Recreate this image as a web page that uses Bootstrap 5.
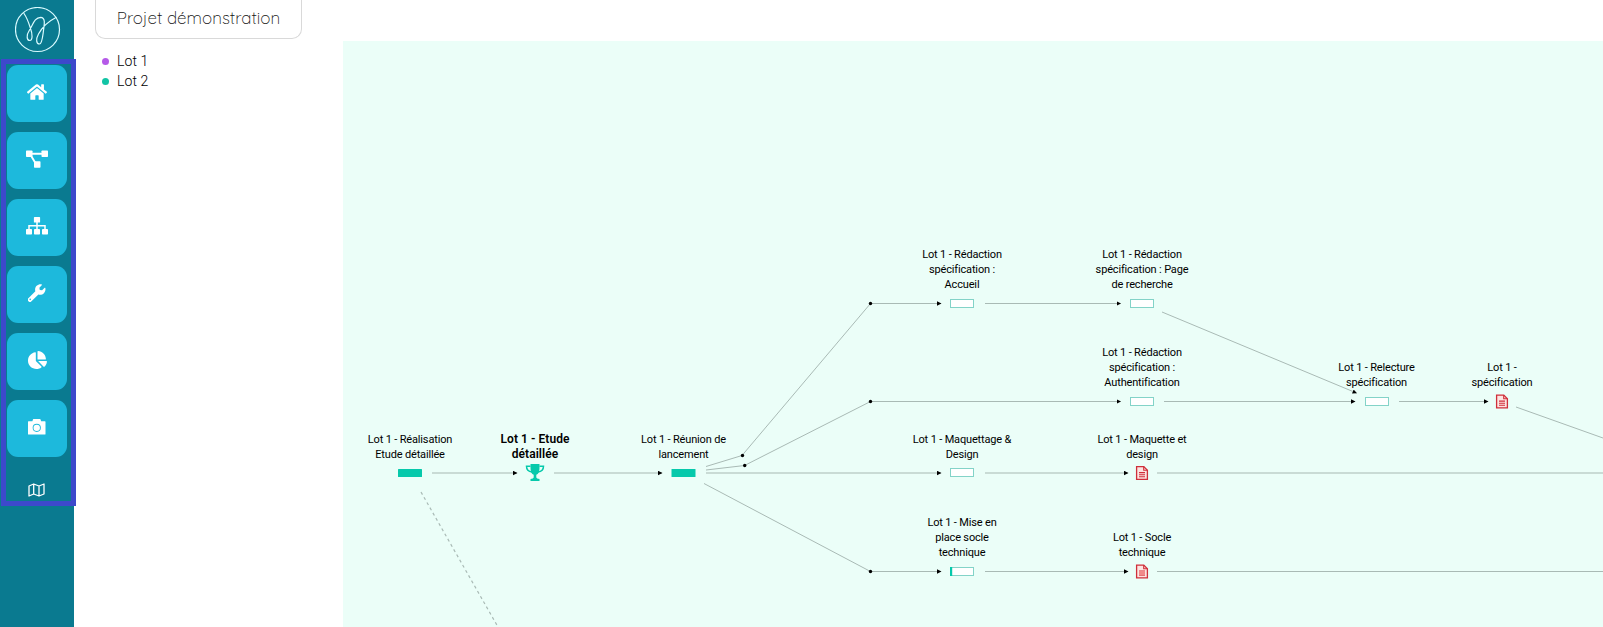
<!DOCTYPE html>
<html lang="fr">
<head>
<meta charset="utf-8">
<meta name="viewport" content="width=device-width, initial-scale=1">
<title>Projet démonstration</title>
<link href="https://cdn.jsdelivr.net/npm/bootstrap@5.3.0/dist/css/bootstrap.min.css" rel="stylesheet">
<style>
  body { font-family: Roboto, "Liberation Sans", sans-serif; color: #000; background: #fff; }
  .side-rail { width: 74px; background: #0a7a90; z-index: 2; }
  .brand-area { height: 59px; padding: 7px 0 0 15px; }
  .rail-menu { width: 75px; height: 447px; margin-left: 1px; border: 5px solid #3d49cb; padding: 1px 0 0 1px; gap: 10px; }
  .rail-btn { width: 60px; height: 57px; border-radius: 11px; background: #1db9dc; border: 0; flex: none; padding: 0 0 3px 0; }
  .rail-link { width: 59px; height: 46px; flex: none; }
  .lots-panel { width: 269px; }
  .project-title { margin-left: 21px; width: 207px; height: 39px; border: 1px solid #d9d9d9; border-top: 0; border-radius: 0 0 10px 10px;
    font: 300 17px/36px Quicksand, Lato, sans-serif; color: #111; white-space: nowrap; }
  .lot-list { margin: 12px 0 0 27.5px; font-size: 14px; font-weight: 350; line-height: 20px; letter-spacing: .1px; }
  .lot-dot { width: 7px; height: 7px; margin-right: 8.5px; }
  .graph-canvas { margin-top: 41px; background: #ebfef8; }
  .graph-node { position: absolute; left: calc(var(--x) * 1px - 343px); top: calc(var(--y) * 1px - 41px);
    transform: translate(-50%, -100%); padding-bottom: 11px; font-size: 11px; line-height: 15.2px; letter-spacing: -.16px; white-space: nowrap; text-align: center; }
  .milestone { font-size: 12px; font-weight: 600; letter-spacing: .06px; }
</style>
</head>
<body>
<div class="d-flex vh-100 overflow-hidden">
  <aside class="side-rail flex-shrink-0">
    <div class="brand-area">
      <svg class="d-block" width="46" height="46" viewBox="0 0 46 46" fill="none" stroke="#d9fbff" stroke-width="1.2" stroke-linecap="round">
        <circle cx="22.500" cy="22.500" r="22"/>
        <path d="M9 6.500C12 11 13.500 15 15.200 20.500C18 28 17.500 33.500 14.800 33.500C11.500 33.500 11.200 28 14.500 23C18 17.500 19.500 10.500 25.700 10.300C31.500 10.500 28.800 20 28.300 25C27.500 31 27 36.800 24.500 37C21 37 20.800 32 23.500 27C27 20.500 33 14.500 41 10.500"/>
      </svg>
    </div>
    <nav class="rail-menu d-flex flex-column">
      <button class="rail-btn d-flex align-items-center justify-content-center" aria-label="Accueil"><svg width="20" height="18" viewBox="0 0 576 512" fill="#fff"><path d="M280 148 96 300v164a16 16 0 0 0 16 16h112a16 16 0 0 0 16-16V368a16 16 0 0 1 16-16h64a16 16 0 0 1 16 16v96a16 16 0 0 0 16 16h112a16 16 0 0 0 16-16V300L296 148a12 12 0 0 0-16 0zM571 251 488 183V44a12 12 0 0 0-12-12h-56a12 12 0 0 0-12 12v73L318 43a48 48 0 0 0-61 0L4 251a12 12 0 0 0-2 17l26 31a12 12 0 0 0 17 2L280 107a12 12 0 0 1 15 0l235 194a12 12 0 0 0 17-2l26-31a12 12 0 0 0-2-17z"/></svg></button>
      <button class="rail-btn d-flex align-items-center justify-content-center" aria-label="Graphe"><svg width="22" height="18" viewBox="0 0 22 18" fill="#fff"><rect y="0.500" width="6.500" height="6.500" rx=".7"/><rect x="15.500" y="0.500" width="6.500" height="6.500" rx=".7"/><rect x="8" y="11.300" width="6.500" height="6.500" rx=".7"/><path d="M3 3.700H18M4 4L10 14" fill="none" stroke="#fff" stroke-width="1.900"/></svg></button>
      <button class="rail-btn d-flex align-items-center justify-content-center" aria-label="Organigramme"><svg width="22" height="18" viewBox="0 0 22 18" fill="#fff"><rect x="7.900" y="0" width="6.200" height="5.600" rx=".7"/><rect y="12" width="6" height="5.500" rx=".7"/><rect x="8" y="12" width="6" height="5.500" rx=".7"/><rect x="16" y="12" width="6" height="5.500" rx=".7"/><path d="M11 5V12M3 12.500V8.800H19V12.500" fill="none" stroke="#fff" stroke-width="1.500"/></svg></button>
      <button class="rail-btn d-flex align-items-center justify-content-center" aria-label="Outils"><svg width="17.500" height="17.500" viewBox="0 0 512 512" fill="#fff"><path d="M507 117c-2-9-14-12-20-5l-75 74-68-11-11-68 75-75c6-6 3-17-6-20C351 0 294 14 253 54c-43 43-55 106-38 161L19 411a64 64 0 1 0 90 90l195-195c55 18 117 5 161-39 41-41 55-98 42-150zM64 472a24 24 0 1 1 0-48 24 24 0 0 1 0 48z"/></svg></button>
      <button class="rail-btn d-flex align-items-center justify-content-center" aria-label="Statistiques"><svg width="19" height="18" viewBox="0 0 544 512" fill="#fff"><path d="M528 288H290l158 158c6 6 16 7 22 1 39-37 65-86 73-142 2-9-6-17-15-17zM512 223C504 103 409 8 289 0c-9-1-17 7-17 16v224h224c9 0 17-8 16-17zM224 288V50c0-9-8-17-17-15C87 52-5 157 0 284c5 130 115 229 245 228 51-1 98-17 137-44 8-6 8-17 2-24z"/></svg></button>
      <button class="rail-btn d-flex align-items-center justify-content-center" aria-label="Photo"><svg width="17.500" height="17.500" viewBox="0 0 512 512" fill="#fff"><path d="M512 112v356a16 16 0 0 1-16 16H16a16 16 0 0 1-16-16V112a16 16 0 0 1 16-16h112l20-56a16 16 0 0 1 14-10h188a16 16 0 0 1 14 10l20 56h112a16 16 0 0 1 16 16zM376 288a120 120 0 1 0-240 0 120 120 0 0 0 240 0zm-26 0a94 94 0 1 1-188 0 94 94 0 0 1 188 0z"/></svg></button>
      <a class="rail-link d-flex align-items-center justify-content-center" href="#" aria-label="Carte"><svg width="17" height="14" viewBox="0 0 17 14" fill="none" stroke="#fff" stroke-width="1.300" stroke-linejoin="round"><path d="M1 3 5.700 1 11 3 16 1V11L11 13 5.700 11 1 13ZM5.700 1V11M11 3V13"/></svg></a>
    </nav>
  </aside>

  <section class="lots-panel flex-shrink-0">
    <h1 class="project-title text-center mb-0">Projet démonstration</h1>
    <ul class="lot-list list-unstyled">
      <li class="d-flex align-items-center"><svg class="lot-dot" viewBox="0 0 7 7"><circle cx="3.500" cy="3.500" r="3.500" fill="#b55ae8"/></svg>Lot 1</li>
      <li class="d-flex align-items-center"><svg class="lot-dot" viewBox="0 0 7 7"><circle cx="3.500" cy="3.500" r="3.500" fill="#12c4a5"/></svg>Lot 2</li>
    </ul>
  </section>

  <main class="graph-canvas flex-grow-1 position-relative overflow-hidden">
    <svg class="d-block" width="1260" height="586" viewBox="343 41 1260 586">
      <defs>
        <marker id="tip" markerUnits="userSpaceOnUse" markerWidth="5" markerHeight="6" refX="4" refY="2.500" orient="auto"><path d="M0 .300 4.500 2.500 0 4.700z" fill="#000"/></marker>
        <g id="task"><rect x="-11.500" y="-3.500" width="23" height="8" fill="#fff" stroke="#83d3c8"/></g>
        <g id="done"><rect x="-12" y="-4" width="24" height="8" rx=".5" fill="#06c9ab"/></g>
        <g id="doc" fill="none" stroke="#cf2f3a" stroke-width="1.300"><path d="M-5.400-6.400H1.800L5.400-2.800V6.400H-5.400Z" fill="#fde3e0"/><path d="M1.700-6.400V-2.700H5.400M-3-.4H3M-3 1.700H3M-3 3.800H3" stroke-width="1.100"/></g>
      </defs>
      <g fill="none" stroke="#a9bab5" stroke-width="1">
        <g marker-end="url(#tip)">
          <path d="M706 466.500 742 455.500 870.500 303.500H941"/>
          <path d="M706 470 744.500 465.500 870.500 401.500H1120.500"/>
          <path d="M704 483.500 870.500 571.500H941"/>
          <path d="M985 303.500H1120.500"/><path d="M985 571.500H1128"/>
          <path d="M1162 312 1356.500 393"/><path d="M1164 401.500H1355"/><path d="M1399 401.500H1488"/>
        </g>
        <g marker-end="url(#tip)" stroke="#c9dbd5" stroke-width="2">
          <path d="M432 473H517"/><path d="M554 473H662"/><path d="M706 473H941"/><path d="M985 473H1128"/>
        </g>
        <path d="M1157 473H1603" stroke="#c9dbd5" stroke-width="2"/>
        <path d="M1157 571.500H1603M1516 407 1603 438"/>
        <path d="M421 492 498 627" stroke-width="1.200" stroke-dasharray="3 3"/>
      </g>
      <g fill="#000"><circle cx="742.500" cy="455.500" r="1.700"/><circle cx="744.700" cy="465.500" r="1.700"/><circle cx="870.500" cy="303.500" r="1.700"/><circle cx="870.500" cy="401.500" r="1.700"/><circle cx="870.500" cy="571.500" r="1.700"/></g>
      <use href="#done" x="410" y="473"/><use href="#done" x="683.500" y="473"/>
      <use href="#task" x="962" y="303"/><use href="#task" x="1142" y="303"/><use href="#task" x="1142" y="401"/>
      <use href="#task" x="1377" y="401"/><use href="#task" x="962" y="472"/><use href="#task" x="962" y="571"/>
      <rect x="950" y="567" width="2.200" height="9" fill="#06c9ab"/>
      <use href="#doc" x="1142" y="473"/><use href="#doc" x="1142" y="571.500"/><use href="#doc" x="1502" y="401.500"/>
      <rect x="1139" y="570.500" width="6" height="5" fill="#f08a8a"/>
      <g transform="translate(525.500 464)"><path d="M5 0H14V4Q14 9.500 10.800 10.800V13.500Q11 14.500 14 15V17H5V15Q8 14.500 8.200 13.500V10.800Q5 9.500 5 4Z" fill="#06c9ab"/><path d="M5 2.300H1Q1 7.500 6.500 8M14 2.300H18Q18 7.500 12.500 8" fill="none" stroke="#06c9ab" stroke-width="1.500"/></g>
    </svg>
    <div class="graph-node" style="--x:410;--y:472.500">Lot 1 - Réalisation<br>Etude détaillée</div>
    <div class="graph-node milestone" style="--x:535;--y:472.500">Lot 1 - Etude<br>détaillée</div>
    <div class="graph-node" style="--x:683.500;--y:472.500">Lot 1 - Réunion de<br>lancement</div>
    <div class="graph-node" style="--x:962;--y:304">Lot 1 - Rédaction<br>spécification :<br>Accueil</div>
    <div class="graph-node" style="--x:1142;--y:304">Lot 1 - Rédaction<br>spécification : Page<br>de recherche</div>
    <div class="graph-node" style="--x:1142;--y:401.500">Lot 1 - Rédaction<br>spécification :<br>Authentification</div>
    <div class="graph-node" style="--x:962;--y:472.500">Lot 1 - Maquettage &amp;<br>Design</div>
    <div class="graph-node" style="--x:1142;--y:472.500">Lot 1 - Maquette et<br>design</div>
    <div class="graph-node" style="--x:962;--y:572">Lot 1 - Mise en<br>place socle<br>technique</div>
    <div class="graph-node" style="--x:1142;--y:571">Lot 1 - Socle<br>technique</div>
    <div class="graph-node" style="--x:1376.500;--y:401">Lot 1 - Relecture<br>spécification</div>
    <div class="graph-node" style="--x:1502;--y:401">Lot 1 -<br>spécification</div>
  </main>
</div>
<script src="https://cdn.jsdelivr.net/npm/bootstrap@5.3.0/dist/js/bootstrap.bundle.min.js"></script>
</body>
</html>
